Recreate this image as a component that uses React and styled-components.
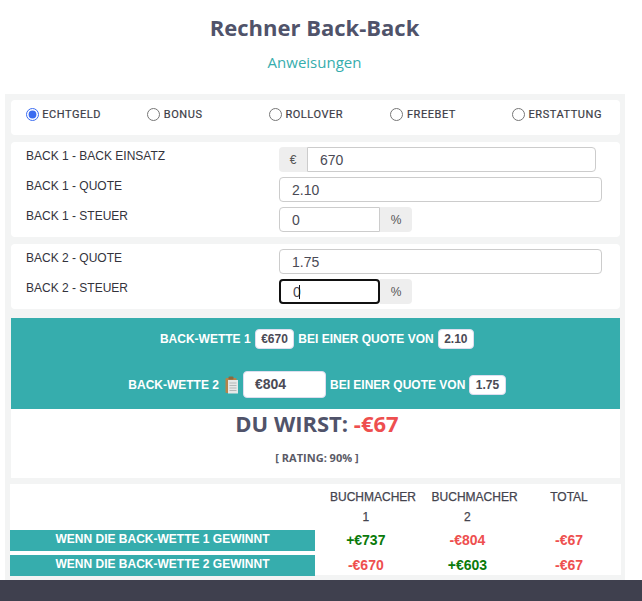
import React from 'react';
import styled, { createGlobalStyle } from 'styled-components';

const GlobalStyle = createGlobalStyle`
  html, body { margin: 0; padding: 0; background: #fff; }
  body { height: 601px; overflow: hidden; font-family: "Liberation Sans", Arial, sans-serif; }
  * { box-sizing: border-box; }
`;

const Page = styled.div`
  width: 642px;
  height: 601px;
  display: flex;
  flex-direction: column;
`;

const Header = styled.header`
  height: 94px;
  padding-top: 11px;
  width: 629px;
  text-align: center;
  font-family: "Open Sans", sans-serif;
`;

const Title = styled.h1`
  margin: 0;
  font-size: 22px;
  line-height: 32px;
  font-weight: 700;
  color: #50536a;
`;

const SubLink = styled.a`
  display: block;
  margin-top: 9px;
  font-size: 15px;
  line-height: 20px;
  color: #36adad;
`;

const Panel = styled.main`
  width: 620px;
  height: 486px;
  margin-left: 5px;
  padding: 6px 5px 0 6px;
  background: #f3f4f4;
  display: flex;
  flex-direction: column;
`;

const Card = styled.section`
  background: #fff;
  border-radius: 4px;
  margin-bottom: 7px;
  padding: ${p => p.$pad || '5px 0 0'};
`;

const RadioRow = styled.div`
  display: grid;
  grid-template-columns: repeat(5, 121.6px);
  height: 25px;
  align-items: start;
`;

const RadioItem = styled.label`
  display: flex;
  align-items: center;
  padding-left: 14.6px;
  height: 19px;
  font-family: Roboto, sans-serif;
  font-size: 11px;
  font-weight: 400;
  letter-spacing: 0.55px;
  color: #3c3c46;
  -webkit-text-stroke: 0.2px #3c3c46;
`;

const RadioInput = styled.input`
  width: 13px;
  height: 13px;
  margin: 0 3.6px 0 0;
  accent-color: #3b6cf0;
`;

const FormRow = styled.div`
  display: flex;
  height: 30px;
  padding-left: 15px;
`;

const FieldLabel = styled.div`
  width: 253px;
  flex: none;
  font-size: 12px;
  line-height: 18px;
  color: #33333c;
`;

const FieldGroup = styled.div`
  position: relative;
  display: flex;
  width: ${p => p.$width}px;
  height: 25px;
`;

const Field = styled.input`
  flex: 1;
  min-width: 0;
  height: 25px;
  padding: 0 12px;
  font-family: "Liberation Sans", Arial, sans-serif;
  font-size: 14px;
  color: #4a4a55;
  background: #fff;
  outline: none;
  border: ${p => (p.$focused ? '2px solid #111' : '1px solid #ccc')};
  border-radius: ${p => p.$radius || '4px'};
`;

const Addon = styled.span`
  width: ${p => p.$width}px;
  flex: none;
  display: flex;
  align-items: center;
  justify-content: center;
  background: #eee;
  font-size: 12px;
  color: #555;
  border-radius: ${p => p.$radius};
`;

const Caret = styled.span`
  position: absolute;
  left: 20px;
  top: 6px;
  width: 1px;
  height: 14px;
  background: #111;
`;

const ResultCard = styled.section`
  background: #fff;
  margin: 2px 0 6px;
  height: 160px;
`;

const TealBox = styled.div`
  height: 91px;
  background: #36adad;
  color: #fff;
  font-size: 12px;
  font-weight: 700;
`;

const BetLine = styled.div`
  display: flex;
  align-items: center;
  justify-content: center;
  gap: 4px;
  padding-left: 3px;
  height: ${p => p.$height}px;
`;

const Pill = styled.span`
  display: inline-block;
  height: 20px;
  line-height: 18px;
  padding: 0 5.5px;
  background: #fff;
  border: 1px solid #dde;
  border-radius: 4px;
  color: #4a4a55;
`;

const StakeBox = styled.span`
  display: inline-block;
  width: 83px;
  height: 27px;
  line-height: 25px;
  padding-left: 11px;
  background: #fff;
  border: 1px solid #dde;
  border-radius: 4px;
  font-size: 14px;
  color: #4a4a55;
`;

const Outcome = styled.div`
  padding-left: 3px;
  text-align: center;
  font-family: "Open Sans", sans-serif;
  font-weight: 700;
  font-size: 22px;
  line-height: 28px;
  color: #50536a;
`;

const Loss = styled.span`
  color: #ee4f4f;
`;

const Rating = styled.div`
  margin-top: 14px;
  padding-left: 3px;
  text-align: center;
  font-family: "Open Sans", sans-serif;
  font-weight: 700;
  font-size: 11px;
  line-height: 14px;
  color: #5a5a66;
`;

const TableCard = styled.section`
  background: #fff;
  margin-left: -1px;
  width: 611px;
  height: 91px;
`;

const TableRow = styled.div`
  display: grid;
  grid-template-columns: 305px repeat(3, 101.6px);
  height: ${p => p.$height}px;
  margin-bottom: ${p => p.$gap || 0}px;
`;

const HeadCell = styled.div`
  padding: 4px 15px 0;
  text-align: center;
  font-size: 12px;
  line-height: 19.5px;
  color: #44444e;
  -webkit-text-stroke: 0.25px #44444e;
`;

const RowLabel = styled.div`
  background: #36adad;
  color: #fff;
  font-size: 12px;
  font-weight: 700;
  line-height: 18px;
  text-align: center;
`;

const Amount = styled.div`
  text-align: center;
  padding: 0 15px;
  font-size: 14px;
  font-weight: 700;
  line-height: 21px;
  color: ${p => (p.$win ? '#0a7a0a' : '#ee4f4f')};
`;

const Footer = styled.footer`
  flex: 1;
  background: #3f404e;
`;

const IconWrap = styled.span`
  display: inline-flex;
  margin-left: 2px;
`;

const ClipboardIcon = () => (
  <IconWrap>
    <svg width="14" height="18" viewBox="0 0 14 18">
      <rect x="0.5" y="2" width="11" height="15" rx="1" fill="#b5834a" />
      <rect x="3.5" y="0.5" width="5" height="3" rx="1" fill="#8a6a40" />
      <rect x="3" y="4" width="10" height="13.5" fill="#e6e8e8" />
      <path d="M4.5 7h7M4.5 9.5h7M4.5 12h7M4.5 14.5h7" stroke="#b4b8b8" strokeWidth="1" />
    </svg>
  </IconWrap>
);

const radios = ['Echtgeld', 'Bonus', 'Rollover', 'Freebet', 'Erstattung'];

export default function App() {
  return (
    <Page>
      <GlobalStyle />
      <Header>
        <Title>Rechner Back-Back</Title>
        <SubLink>Anweisungen</SubLink>
      </Header>
      <Panel>
        <Card $pad="5px 0">
          <RadioRow>
            {radios.map((r, i) => (
              <RadioItem key={r}>
                <RadioInput type="radio" name="mode" defaultChecked={i === 0} />
                {r.toUpperCase()}
              </RadioItem>
            ))}
          </RadioRow>
        </Card>
        <Card>
          <FormRow>
            <FieldLabel>BACK 1 - BACK EINSATZ</FieldLabel>
            <FieldGroup $width={317}>
              <Addon $width={28} $radius="4px 0 0 4px">€</Addon>
              <Field readOnly value="670" $radius="0 4px 4px 0" />
            </FieldGroup>
          </FormRow>
          <FormRow>
            <FieldLabel>BACK 1 - QUOTE</FieldLabel>
            <FieldGroup $width={323}>
              <Field readOnly value="2.10" />
            </FieldGroup>
          </FormRow>
          <FormRow>
            <FieldLabel>BACK 1 - STEUER</FieldLabel>
            <FieldGroup $width={133}>
              <Field readOnly value="0" $radius="4px 0 0 4px" />
              <Addon $width={32} $radius="0 4px 4px 0">%</Addon>
            </FieldGroup>
          </FormRow>
        </Card>
        <Card>
          <FormRow>
            <FieldLabel>BACK 2 - QUOTE</FieldLabel>
            <FieldGroup $width={323}>
              <Field readOnly value="1.75" />
            </FieldGroup>
          </FormRow>
          <FormRow>
            <FieldLabel>BACK 2 - STEUER</FieldLabel>
            <FieldGroup $width={133}>
              <Field readOnly value="0" $focused $radius="4px" />
              <Caret />
              <Addon $width={32} $radius="0 4px 4px 0">%</Addon>
            </FieldGroup>
          </FormRow>
        </Card>
        <ResultCard>
          <TealBox>
            <BetLine $height={42}>
              BACK-WETTE 1 <Pill>€670</Pill> BEI EINER QUOTE VON <Pill>2.10</Pill>
            </BetLine>
            <BetLine $height={49}>
              BACK-WETTE 2 <ClipboardIcon /> <StakeBox>€804</StakeBox> BEI EINER QUOTE VON <Pill>1.75</Pill>
            </BetLine>
          </TealBox>
          <Outcome>DU WIRST: <Loss>-€67</Loss></Outcome>
          <Rating>[ RATING: 90% ]</Rating>
        </ResultCard>
        <TableCard>
          <TableRow $height={46}>
            <div />
            <HeadCell>BUCHMACHER 1</HeadCell>
            <HeadCell>BUCHMACHER 2</HeadCell>
            <HeadCell>TOTAL</HeadCell>
          </TableRow>
          <TableRow $height={20} $gap={5}>
            <RowLabel>WENN DIE BACK-WETTE 1 GEWINNT</RowLabel>
            <Amount $win>+€737</Amount>
            <Amount>-€804</Amount>
            <Amount>-€67</Amount>
          </TableRow>
          <TableRow $height={20}>
            <RowLabel>WENN DIE BACK-WETTE 2 GEWINNT</RowLabel>
            <Amount>-€670</Amount>
            <Amount $win>+€603</Amount>
            <Amount>-€67</Amount>
          </TableRow>
        </TableCard>
      </Panel>
      <Footer />
    </Page>
  );
}
